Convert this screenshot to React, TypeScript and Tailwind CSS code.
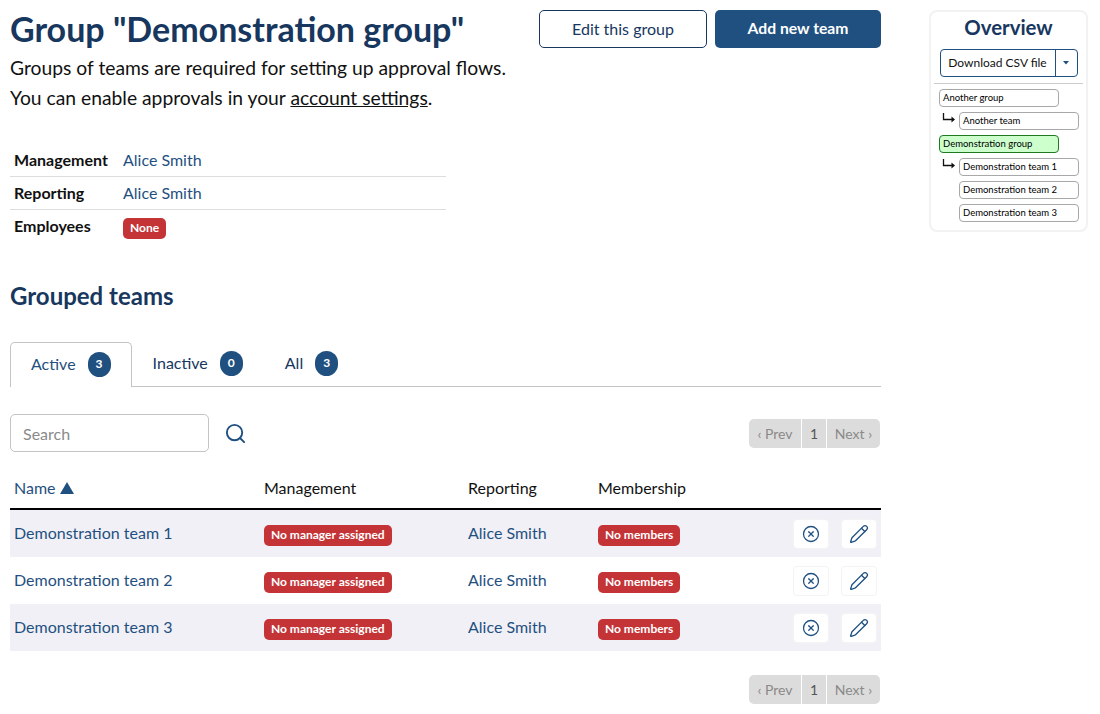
import React from "react";
import { Search, CircleX, Pencil } from "lucide-react";

const TEAMS = ["Demonstration team 1", "Demonstration team 2", "Demonstration team 3"];
const TABS = [
  { label: "Active", count: 3 },
  { label: "Inactive", count: 0 },
  { label: "All", count: 3 },
];

function Badge({ children }: { children: React.ReactNode }) {
  return (
    <span className="inline-block rounded-[5px] bg-[#c43437] px-[7px] h-[21px] leading-[20px] text-[12px] font-bold text-white">
      {children}
    </span>
  );
}

function Pagination() {
  return (
    <div className="flex h-[29px] gap-px text-[14px] text-[#8a8a8a]">
      <span className="flex w-[52px] items-center justify-center rounded-l-[5px] bg-[#dcdcdc]">‹ Prev</span>
      <span className="flex w-[24px] items-center justify-center bg-[#dcdcdc] text-[#555]">1</span>
      <span className="flex w-[53px] items-center justify-center rounded-r-[5px] bg-[#dcdcdc]">Next ›</span>
    </div>
  );
}

function ElbowArrow() {
  return (
    <svg width="14" height="10" viewBox="0 0 14 10" className="text-[#111]">
      <path d="M1.5 0V6.5H10" fill="none" stroke="currentColor" strokeWidth="1.3" />
      <path d="M9.5 3.5L13 6.5L9.5 9.5Z" fill="currentColor" />
    </svg>
  );
}

function TreeNode({ label, active, arrow, team }: { label: string; active?: boolean; arrow?: boolean; team?: boolean }) {
  return (
    <div className={`relative h-[18px] w-[120px] ${team ? "ml-[20px]" : ""}`}>
      {arrow && (
        <span className="absolute left-[-17px] top-[1px]">
          <ElbowArrow />
        </span>
      )}
      <div
        className={`h-[18px] rounded-[4px] border pl-[3px] text-[9.5px] leading-[16px] text-black ${
          active ? "border-[#1f7a1f] bg-[#ccffcc]" : "border-[#a8a8a8] bg-white"
        }`}
      >
        {label}
      </div>
    </div>
  );
}

export default function App() {
  return (
    <div className="flex min-h-screen w-full items-start bg-white font-['Lato','Open_Sans',sans-serif] text-[#111]">
      {/* main column */}
      <div className="ml-[10px] w-[871px]">
        <div className="flex items-start justify-between pt-[10px]">
          <div>
            <h1 className="h-[40px] text-[34px] font-bold leading-[38px] text-[#17375e]">Group "Demonstration group"</h1>
          </div>
          <div className="flex gap-2">
            <button className="h-[38px] w-[168px] rounded-[5px] border border-[#17375e] bg-white text-[16px] text-[#17375e]" type="button">
              Edit this group
            </button>
            <button className="h-[38px] w-[166px] rounded-[5px] bg-[#1f5080] text-[15.7px] font-bold text-white" type="button">
              Add new team
            </button>
          </div>
        </div>

        <p className="mt-[3px] text-[19.3px] leading-[30px]">
          Groups of teams are required for setting up approval flows.
          <br />
          You can enable approvals in your <a className="underline">account settings</a>.
        </p>

        <div className="mt-[31px] w-[436px] text-[16px]">
          <div className="flex h-[33px] items-center border-b border-[#dddddd] pl-1">
            <span className="w-[109px] font-bold">Management</span>
            <span className="text-[#1f5080]">Alice Smith</span>
          </div>
          <div className="flex h-[33px] items-center border-b border-[#dddddd] pl-1">
            <span className="w-[109px] font-bold">Reporting</span>
            <span className="text-[#1f5080]">Alice Smith</span>
          </div>
          <div className="flex h-[33px] items-center pl-1">
            <span className="w-[109px] pb-[2px] font-bold">Employees</span>
            <span>
              <Badge>None</Badge>
            </span>
          </div>
        </div>

        <h2 className="mt-[38px] text-[24px] font-bold leading-[30px] text-[#17375e]">Grouped teams</h2>

        {/* tabs */}
        <div className="mt-[31px] flex h-[45px] border-b border-[#c4c4c4]">
          {TABS.map((t, i) => (
            <div
              key={t.label}
              className={`flex items-center gap-[12px] pb-[2px] text-[16px] ${
                i === 0
                  ? "mb-[-1px] rounded-t-[5px] border border-b-0 border-[#c4c4c4] bg-white px-[20px] text-[#1f5080]"
                  : "px-[21px] text-[#17375e]"
              }`}
            >
              {t.label}
              <span className="flex h-[25px] w-[23px] items-center justify-center rounded-full bg-[#1f5080] text-[12px] font-bold text-white">
                {t.count}
              </span>
            </div>
          ))}
        </div>

        {/* search + pagination */}
        <div className="mt-[27px] flex items-center justify-between pr-px">
          <div className="flex items-center gap-[15px]">
            <input
              className="h-[38px] w-[199px] rounded-[5px] border border-[#c4c4c4] px-3 text-[16px] placeholder:text-[#8a8a8a]"
              placeholder="Search"
            />
            <Search size={23} strokeWidth={2} className="text-[#1f5080]" />
          </div>
          <Pagination />
        </div>

        {/* table */}
        <div className="mt-[17px]">
          <div className="grid h-[41px] grid-cols-[250px_204px_130px_1fr] items-center border-b-2 border-black pb-px pl-1 text-[16px]">
            <span className="flex items-center gap-[4px] text-[#1f5080]">
              Name
              <svg width="14" height="12" viewBox="0 0 14 12">
                <path d="M7 0L14 12H0Z" fill="#1f5080" />
              </svg>
            </span>
            <span>Management</span>
            <span>Reporting</span>
            <span>Membership</span>
          </div>
          {TEAMS.map((name, i) => (
            <div
              key={name}
              className={`grid h-[47px] grid-cols-[250px_204px_130px_1fr] items-center pl-1 text-[16px] ${
                i % 2 === 0 ? "bg-[#f1f0f7]" : "bg-white"
              }`}
            >
              <span className="pb-[2px] text-[#1f5080]">{name}</span>
              <span><Badge>No manager assigned</Badge></span>
              <span className="pb-[2px] text-[#1f5080]">Alice Smith</span>
              <div className="flex items-center justify-between pr-[4px]">
                <span><Badge>No members</Badge></span>
                <div className="flex gap-[12px]">
                  <button className="flex h-[30px] w-[36px] items-center justify-center rounded-[4px] border border-[#f3f3f3] bg-white" type="button">
                    <CircleX size={18} strokeWidth={1.7} className="text-[#1f5080]" />
                  </button>
                  <button className="flex h-[30px] w-[36px] items-center justify-center rounded-[4px] border border-[#f3f3f3] bg-white" type="button">
                    <Pencil size={20} strokeWidth={1.6} className="text-[#1f5080]" />
                  </button>
                </div>
              </div>
            </div>
          ))}
        </div>

        <div className="mt-[24px] flex justify-end pr-px">
          <Pagination />
        </div>
      </div>

      {/* overview panel */}
      <aside className="ml-[48px] mt-[10px] h-[222px] w-[159px] rounded-[8px] border-2 border-[#f2f2f2] bg-white">
        <h3 className="mt-[1px] text-center text-[20.4px] font-bold leading-[28px] text-[#17375e]">Overview</h3>
        <div className="mx-auto mt-[8px] flex h-[28px] w-[138px] rounded-[4px] border border-[#1f5080] text-[12px] text-[#111]">
          <span className="flex w-[114px] items-center justify-center">Download CSV file</span>
          <span className="flex flex-1 items-center justify-center border-l border-[#1f5080]">
            <svg width="6" height="4" viewBox="0 0 6 4"><path d="M0 0H6L3 3.5Z" fill="#1f5080" /></svg>
          </span>
        </div>
        <div className="mx-[3px] mt-[6px] border-t border-[#cccccc]" />
        <div className="ml-[8px] mt-[5px] flex flex-col gap-[5px]">
          <TreeNode label="Another group" />
          <TreeNode label="Another team" team arrow />
          <TreeNode label="Demonstration group" active />
          <TreeNode label="Demonstration team 1" team arrow />
          <TreeNode label="Demonstration team 2" team />
          <TreeNode label="Demonstration team 3" team />
        </div>
      </aside>
    </div>
  );
}
